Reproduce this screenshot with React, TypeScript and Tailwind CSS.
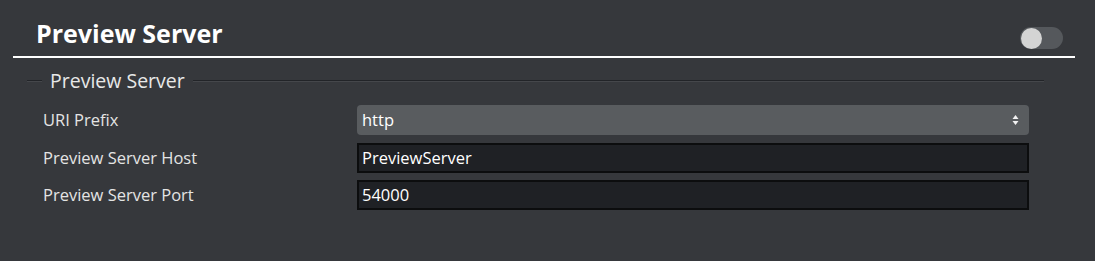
import { useState } from "react";

const font = { fontFamily: '"Open Sans", "Liberation Sans", sans-serif' };

const Row = ({ label, children }: { label: string; children: React.ReactNode }) => (
  <div className="flex items-center">
    <div className="w-[357px] pl-[43px] text-[16.5px] text-[#e4e4e4]">{label}</div>
    <div className="w-[672px]">{children}</div>
  </div>
);

const App = () => {
  const [on, setOn] = useState(false);

  return (
    <div className="w-[1095px] h-[261px] bg-[#36383c] overflow-hidden" style={font}>
      {/* Header */}
      <div className="pl-[13px] pr-[20px]">
        <div className="flex items-start justify-between h-[56px]">
          <h1 className="pl-[23px] pt-[18px] text-[25px] leading-[30px] font-bold text-white">Preview Server</h1>
          <button
            onClick={() => setOn(!on)}
            className="mt-[27px] mr-[12px] w-[43px] h-[22px] rounded-full bg-[#55585c] flex items-center px-[1px]"
          >
            <span className={"block w-[21px] h-[21px] rounded-full bg-[#d4d4d4] " + (on ? "ml-auto" : "")} />
          </button>
        </div>
        <div className="h-[2px] bg-white" />
      </div>

      {/* Group */}
      <div className="pl-[27px] pr-[51px] mt-[11px] flex items-center gap-[8px]">
        <div className="w-[15px] border-t border-b border-t-[#222428] border-b-[#45474b]" />
        <span className="text-[19.5px] leading-[24px] text-[#e8e8e8]">Preview Server</span>
        <div className="flex-1 border-t border-b border-t-[#222428] border-b-[#45474b]" />
      </div>

      <div className="mt-[12px] flex flex-col">
        <Row label="URI Prefix">
          <div className="h-[30px] rounded-[4px] bg-[#595c5f] flex items-center justify-between pl-[5px] pr-[10px] text-[16.5px] text-white">
            <span>http</span>
            <svg width="7" height="12" viewBox="0 0 7 12">
              <path d="M3.5 1 L6.5 5 L0.5 5 Z" fill="#f2f2f2" />
              <path d="M3.5 11 L6.5 7 L0.5 7 Z" fill="#f2f2f2" />
            </svg>
          </div>
        </Row>
        <div className="h-[8px]" />
        <Row label="Preview Server Host">
          <div className="h-[30px] border-2 border-[#0c0d0e] bg-[#1f2125] flex items-center pl-[3px] text-[16.5px] text-white">
            PreviewServer
          </div>
        </Row>
        <div className="h-[7px]" />
        <Row label="Preview Server Port">
          <div className="h-[30px] border-2 border-[#0c0d0e] bg-[#1f2125] flex items-center pl-[3px] text-[16.5px] text-white">
            54000
          </div>
        </Row>
      </div>
    </div>
  );
};

export default App;
